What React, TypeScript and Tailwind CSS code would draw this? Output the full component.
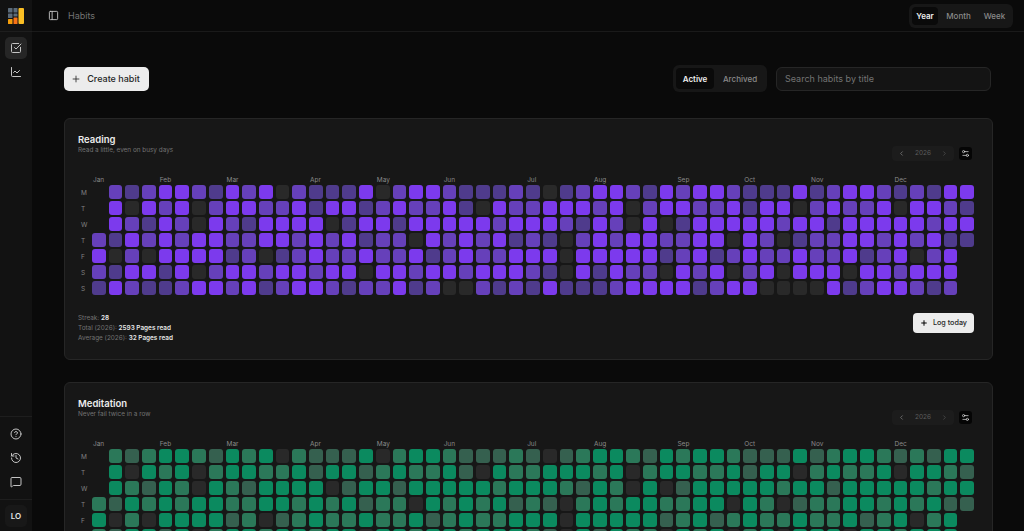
import {
  ChartLine,
  ChevronLeft,
  ChevronRight,
  CircleHelp,
  History,
  MessageSquare,
  PanelLeft,
  Plus,
  Settings2,
  SquareCheckBig,
} from "lucide-react";

const ROWS = [
  ".212332132302111302332111210123321323" + "3211131233212133",
  ".303230233223133123223103223332302332" + "2313302322303321",
  ".321320321333301331333332333213203013" + "3333233133333233",
  "2132323322332323122032323121023233223" + "3032012233232311",
  "3020333312012322322312322333033333123" + "123223223123023.",
  "2133130233233233033233233321031322032" + "302303330332333.",
  "1321123323123321223120021213111233331" + "233000031233212.",
];

const DAYS = ["M", "T", "W", "T", "F", "S", "S"];

const MONTHS = [
  { label: "Jan", col: "col-start-1" },
  { label: "Feb", col: "col-start-5" },
  { label: "Mar", col: "col-start-9" },
  { label: "Apr", col: "col-start-14" },
  { label: "May", col: "col-start-18" },
  { label: "Jun", col: "col-start-22" },
  { label: "Jul", col: "col-start-27" },
  { label: "Aug", col: "col-start-31" },
  { label: "Sep", col: "col-start-36" },
  { label: "Oct", col: "col-start-40" },
  { label: "Nov", col: "col-start-44" },
  { label: "Dec", col: "col-start-49" },
];

const PURPLE: Record<string, string> = {
  ".": "bg-transparent",
  "0": "bg-[#292929]",
  "1": "bg-[#4f3b8c]",
  "2": "bg-[#6640ba]",
  "3": "bg-[#7c3aed]",
};

const GREEN: Record<string, string> = {
  ".": "bg-transparent",
  "0": "bg-[#292929]",
  "1": "bg-[#35604f]",
  "2": "bg-[#2b7859]",
  "3": "bg-[#0b8a5f]",
};

function Logo() {
  return (
    <svg viewBox="0 0 16 16" className="h-4 w-4">
      <rect x="0" y="0" width="4.5" height="4.5" rx="0.5" fill="#5b6b7b" />
      <rect x="5.5" y="0" width="4" height="4.5" rx="0.5" fill="#5b6b7b" />
      <rect x="0" y="5.5" width="4.5" height="4.5" rx="0.5" fill="#5b6b7b" />
      <rect x="5.5" y="5.5" width="4" height="3" rx="0.5" fill="#5b6b7b" />
      <rect x="0" y="11" width="4.5" height="5" rx="0.5" fill="#f59e0b" />
      <rect x="5.5" y="9.5" width="4" height="6.5" rx="0.5" fill="#f97316" />
      <rect x="10.5" y="0" width="5.5" height="16" rx="1" fill="#fbbf24" />
    </svg>
  );
}

function Sidebar() {
  return (
    <aside className="flex h-full w-8 shrink-0 flex-col bg-[#121212]">
      <div className="flex h-8 items-center justify-center border-b border-[#1e1e1e]">
        <Logo />
      </div>
      <nav className="flex flex-col items-center gap-[2px] pt-[5px] text-[#c4c4c4]">
        <div className="flex h-[22px] w-[22px] items-center justify-center rounded-[5px] bg-[#262626]">
          <SquareCheckBig className="h-3 w-3" />
        </div>
        <div className="flex h-[22px] w-[22px] items-center justify-center">
          <ChartLine className="h-3 w-3" />
        </div>
      </nav>
      <div className="mt-auto flex flex-col items-center gap-3 border-t border-[#1e1e1e] py-[11px] text-[#c4c4c4]">
        <CircleHelp className="h-3 w-3" />
        <History className="h-3 w-3" />
        <MessageSquare className="h-3 w-3" />
      </div>
      <div className="flex h-8 items-center justify-center border-t border-[#1e1e1e]">
        <div className="flex h-[22px] w-[22px] items-center justify-center rounded-[5px] bg-[#181818] text-[8px] font-semibold text-[#e5e5e5]">
          LO
        </div>
      </div>
    </aside>
  );
}

function Header() {
  return (
    <header className="flex h-8 shrink-0 items-center justify-between border-b border-[#1a1a1a] pl-4 pr-[11px]">
      <div className="flex items-center gap-[9px] text-[#c4c4c4]">
        <PanelLeft className="h-[11px] w-[11px]" />
        <span className="text-[9px] text-[#737373]">Habits</span>
      </div>
      <div className="flex h-6 items-center rounded-md bg-[#171717] p-[3px] text-[8px] font-medium text-[#8a8a8a]">
        <span className="flex h-[18px] w-[26px] items-center justify-center rounded bg-[#0a0a0a] font-semibold text-[#f0f0f0]">Year</span>
        <span className="flex w-[41px] justify-center">Month</span>
        <span className="flex w-[31px] justify-center">Week</span>
      </div>
    </header>
  );
}

function Toolbar() {
  return (
    <div className="flex h-[27px] items-center justify-between pr-[2px]">
      <button className="flex h-6 w-[85px] items-center justify-center gap-[6px] rounded-[5px] bg-[#ececec] pr-[2px] text-[9px] font-medium text-[#262626]">
        <Plus className="h-[10px] w-[10px]" />
        Create habit
      </button>
      <div className="flex items-center gap-[9px]">
        <div className="flex h-[27px] w-[94px] items-center rounded-md bg-[#171717] p-[3px] text-[8px] font-medium text-[#8a8a8a]">
          <span className="flex h-[21px] w-[38px] items-center justify-center rounded bg-[#0a0a0a] font-semibold text-[#f0f0f0]">Active</span>
          <span className="flex flex-1 justify-center pl-[2px]">Archived</span>
        </div>
        <div className="flex h-6 w-[215px] items-center rounded-md border border-[#262626] bg-[#141414] px-2 text-[9px] text-[#737373]">
          Search habits by title
        </div>
      </div>
    </div>
  );
}

function HabitGrid({ colors }: { colors: Record<string, string> }) {
  return (
    <div className="flex">
      <div className="flex w-[14px] shrink-0 flex-col pt-[9px]">
        {DAYS.map((d, i) => (
          <span key={i} className="flex h-4 items-center justify-start pl-[3px] text-[6.5px] leading-none text-[#808080]">
            {d}
          </span>
        ))}
      </div>
      <div className="flex-1">
        <div className="grid h-[9px] grid-cols-[repeat(53,minmax(0,1fr))] gap-x-[3px]">
          {MONTHS.map((m) => (
            <span key={m.label} className={`${m.col} col-span-3 pl-[1px] text-[6.5px] leading-[8px] text-[#8a8a8a]`}>
              {m.label}
            </span>
          ))}
        </div>
        <div className="grid grid-cols-[repeat(53,minmax(0,1fr))] gap-x-[3px] gap-y-[2.5px]">
          {ROWS.flatMap((row, r) =>
            row.split("").map((c, i) => (
              <div key={`${r}-${i}`} className={`h-[13.5px] rounded-[3px] ${colors[c]}`} />
            )),
          )}
        </div>
      </div>
    </div>
  );
}

function HabitCard({
  title,
  subtitle,
  colors,
}: {
  title: string;
  subtitle: string;
  colors: Record<string, string>;
}) {
  return (
    <section className="h-[242px] shrink-0 rounded-md border border-[#262626] bg-[#171717] pl-[13px] pr-[18px] pt-[14px]">
      <div className="flex h-[43px] items-start justify-between">
        <div>
          <h2 className="text-[9.5px] font-semibold leading-[13px] text-[#ececec]">{title}</h2>
          <p className="text-[6.4px] leading-[9px] text-[#737373]">{subtitle}</p>
        </div>
        <div className="mr-[2px] mt-[13px] flex items-center gap-[5px]">
          <div className="flex h-[15px] w-[62px] items-center justify-between rounded bg-[#1c1c1c] px-[6px] text-[6.5px] text-[#5c5c5c]">
            <ChevronLeft className="h-[7px] w-[7px] text-[#9a9a9a]" />
            2026
            <ChevronRight className="h-[7px] w-[7px]" />
          </div>
          <div className="flex h-[13px] w-[13px] items-center justify-center rounded-[3px] bg-[#050505] text-[#d4d4d4]">
            <Settings2 className="h-[9px] w-[9px]" />
          </div>
        </div>
      </div>
      <HabitGrid colors={colors} />
      <div className="mt-[16px] flex items-start justify-between">
        <div className="text-[6.4px] leading-[10px] text-[#737373]">
          <p>
            Streak: <span className="font-semibold text-[#e5e5e5]">28</span>
          </p>
          <p>
            Total (2026): <span className="font-semibold text-[#e5e5e5]">2593 Pages read</span>
          </p>
          <p>
            Average (2026): <span className="font-semibold text-[#e5e5e5]">32 Pages read</span>
          </p>
        </div>
        <button className="flex h-5 w-[61px] items-center justify-center gap-[5px] rounded-[4px] bg-[#ececec] text-[7.2px] font-medium text-[#262626]">
          <Plus className="h-[8px] w-[8px] text-black" strokeWidth={3} />
          Log today
        </button>
      </div>
    </section>
  );
}

export default function App() {
  return (
    <div className="flex h-screen overflow-hidden bg-[#0a0a0a] font-['Inter',sans-serif]">
      <Sidebar />
      <div className="flex min-w-0 flex-1 flex-col">
        <Header />
        <main className="flex flex-col overflow-hidden pl-8 pr-[31px] pt-[33px]">
          <Toolbar />
          <div className="mt-[26px] flex flex-col gap-[22px]">
            <HabitCard title="Reading" subtitle="Read a little, even on busy days" colors={PURPLE} />
            <HabitCard title="Meditation" subtitle="Never fail twice in a row" colors={GREEN} />
          </div>
        </main>
      </div>
    </div>
  );
}
